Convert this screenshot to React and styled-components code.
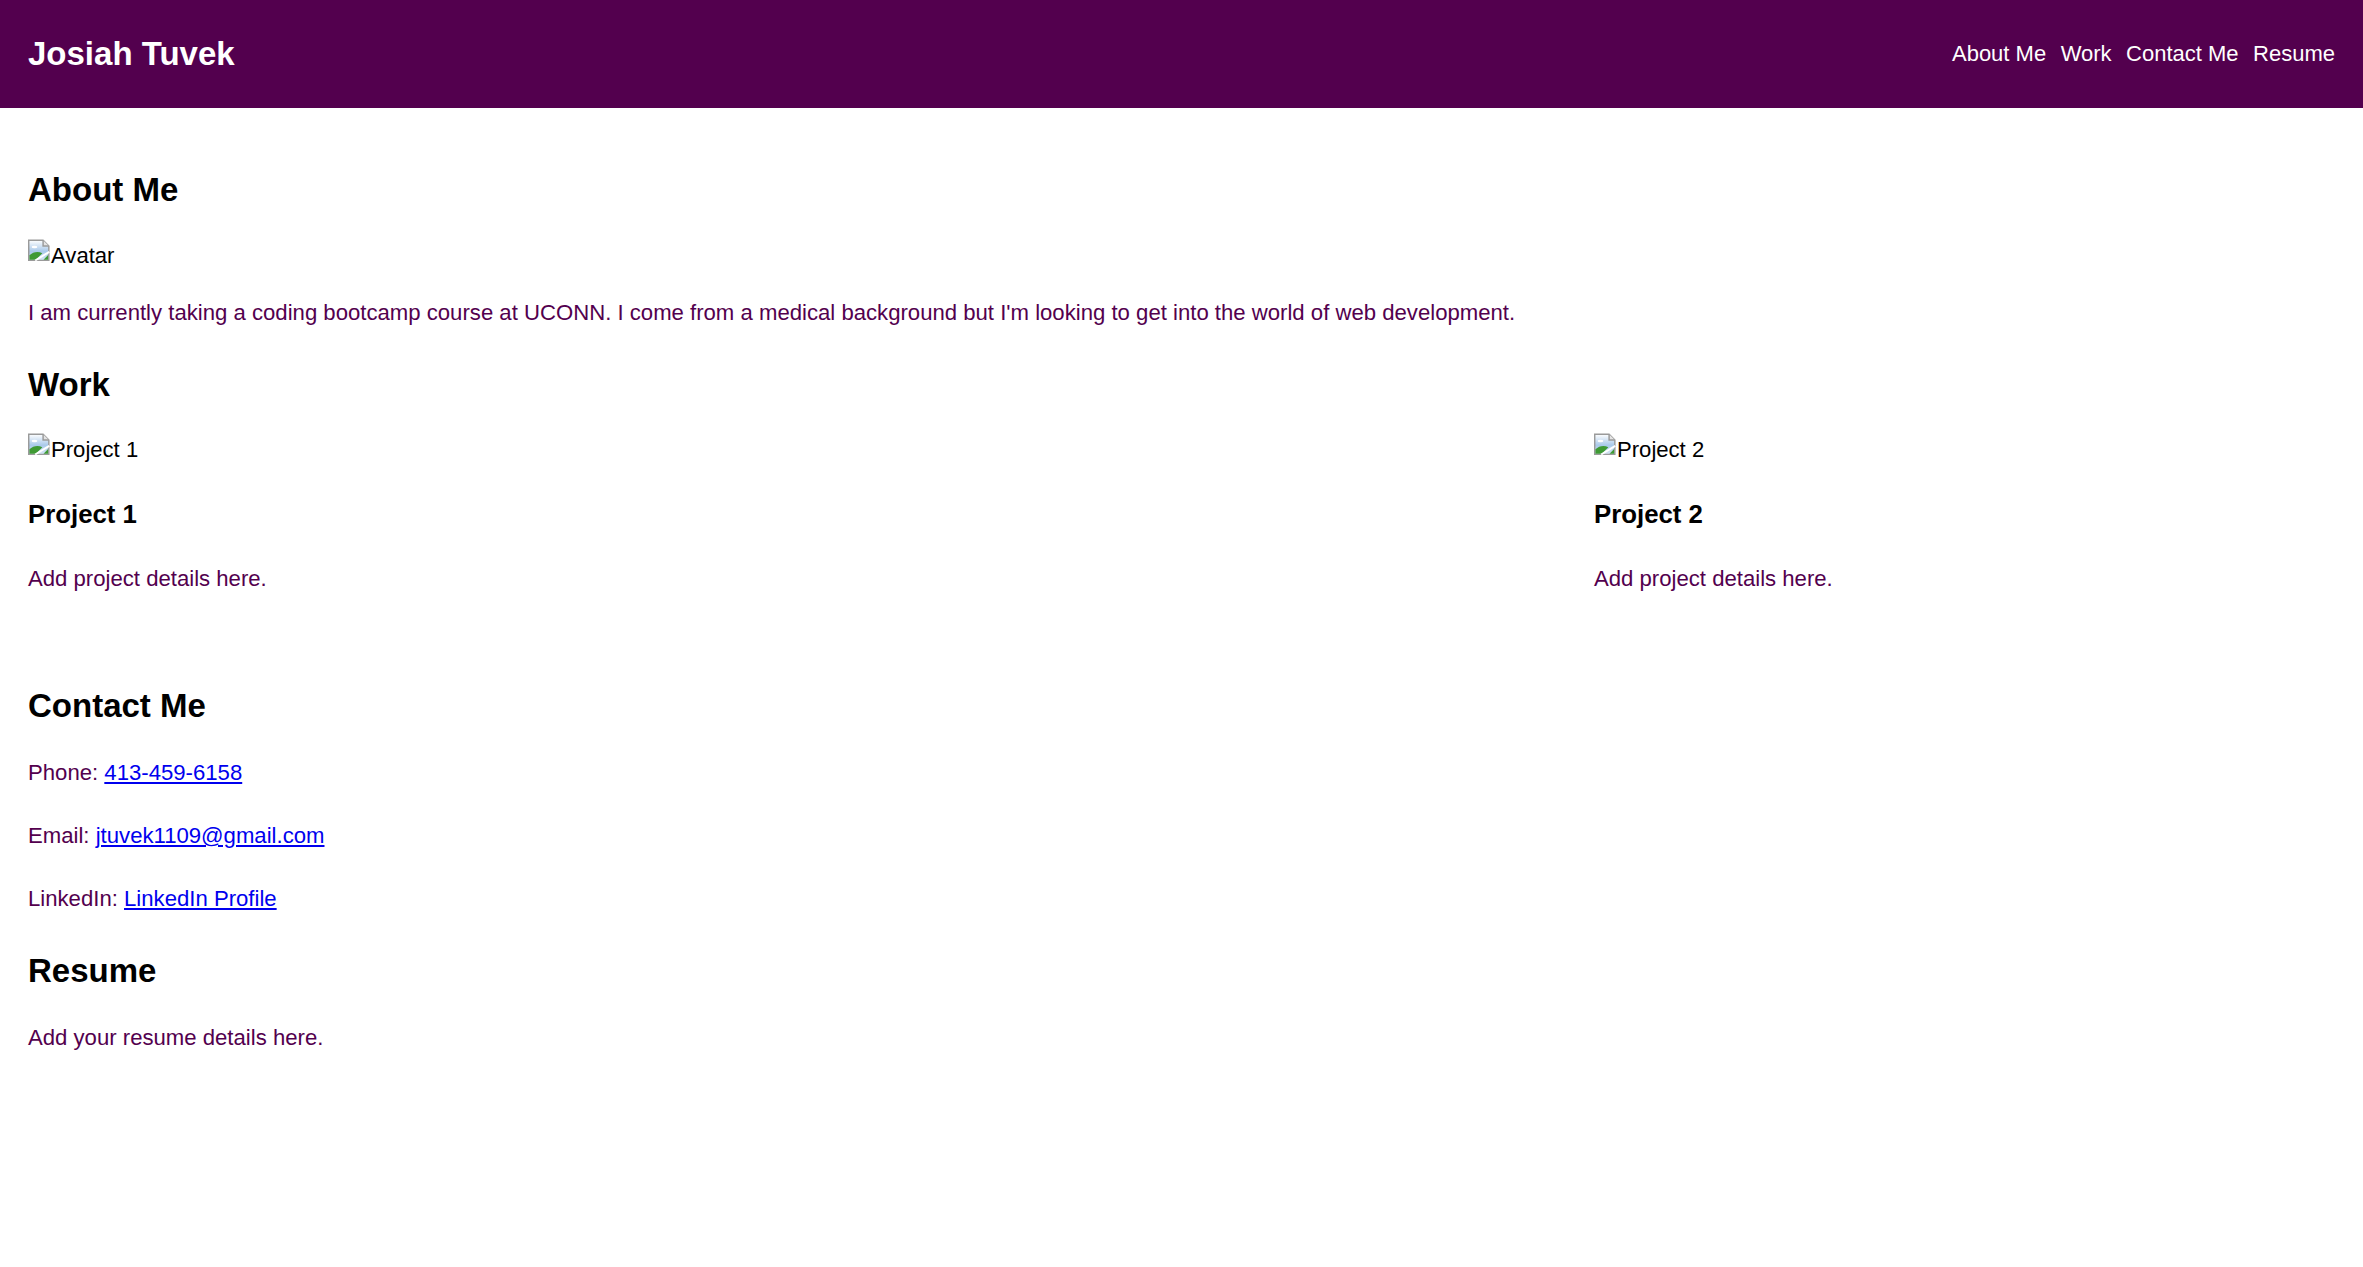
import React from "react";
import styled, { createGlobalStyle } from "styled-components";

const GlobalStyle = createGlobalStyle`
  html, body {
    margin: 0;
    padding: 0;
    background: #ffffff;
  }
  body {
    font-family: "Liberation Sans", Arial, sans-serif;
    font-size: 22.1px;
    color: #53004e;
  }
`;

const Header = styled.header`
  display: flex;
  align-items: center;
  justify-content: space-between;
  height: 108px;
  padding: 0 28px;
  background: #53004e;
`;

const Brand = styled.h1`
  margin: 0;
  font-size: 33px;
  line-height: 38px;
  font-weight: 700;
  color: #ffffff;
`;

const Nav = styled.nav`
  display: flex;
  align-items: center;
  gap: 14.5px;
`;

const NavLink = styled.a`
  color: #ffffff;
  text-decoration: none;
  font-size: 22px;
  line-height: 26px;
`;

const Main = styled.main`
  padding: 63px 28px 80px;
`;

const Section = styled.section`
  display: flex;
  flex-direction: column;
  align-items: flex-start;
  margin-top: ${(p) => p.$mt || 0}px;
`;

const SectionTitle = styled.h2`
  margin: 0;
  font-size: 33px;
  line-height: 38px;
  font-weight: 700;
  color: #000000;
`;

const Text = styled.p`
  margin: ${(p) => p.$mt || 0}px 0 0;
  font-size: 22.15px;
  line-height: 26px;
  color: #53004e;
`;

const Link = styled.a`
  color: #0000ee;
  text-decoration: underline;
`;

const AltRow = styled.div`
  display: flex;
  align-items: flex-start;
  margin-top: ${(p) => p.$mt || 0}px;
  color: #000000;
  font-size: 22.1px;
  line-height: 26px;
`;

const AltText = styled.span`
  padding-top: 4px;
`;

const Projects = styled.div`
  display: grid;
  grid-template-columns: 1566px 1fr;
  align-self: stretch;
  margin-top: 29px;
`;

const Project = styled.article`
  display: flex;
  flex-direction: column;
  align-items: flex-start;
`;

const ProjectTitle = styled.h3`
  margin: 36px 0 0;
  font-size: 25.8px;
  line-height: 30px;
  font-weight: 700;
  color: #000000;
`;

const BrokenIcon = () => (
  <svg width="23" height="24" viewBox="0 0 16 16" aria-hidden="true">
    <defs>
      <linearGradient id="sky" x1="0" y1="0" x2="0" y2="1">
        <stop offset="0" stopColor="#ffffff" />
        <stop offset="0.55" stopColor="#a9c9ea" />
        <stop offset="1" stopColor="#d7e7f6" />
      </linearGradient>
    </defs>
    <path d="M0.5 0.5 H10.5 L14.5 4.5 V14.5 H0.5 Z" fill="url(#sky)" stroke="#9a9a9a" strokeWidth="1" />
    <path d="M10.5 0.5 V4.5 H14.5" fill="#e4e4e4" stroke="#9a9a9a" strokeWidth="1" />
    <ellipse cx="4.5" cy="5.2" rx="2" ry="0.9" fill="#ffffff" />
    <path d="M1 14 V11 C3.5 8.5 7 8 10 9.5 L5.5 14 Z" fill="#3f9a34" />
    <path d="M10.8 14 L14 10.8 V14 Z" fill="#3f9a34" />
    <path d="M5 14.6 L14.8 8.6" stroke="#ffffff" strokeWidth="1.4" />
  </svg>
);

const BrokenImage = ({ alt, mt }) => (
  <AltRow $mt={mt}>
    <BrokenIcon />
    <AltText>{alt}</AltText>
  </AltRow>
);

const projects = [
  { id: 1, name: "Project 1" },
  { id: 2, name: "Project 2" },
];

export default function App() {
  return (
    <>
      <GlobalStyle />
      <Header>
        <Brand>Josiah Tuvek</Brand>
        <Nav>
          <NavLink href="#about">About Me</NavLink>
          <NavLink href="#work">Work</NavLink>
          <NavLink href="#contact">Contact Me</NavLink>
          <NavLink href="#resume">Resume</NavLink>
        </Nav>
      </Header>
      <Main>
        <Section id="about">
          <SectionTitle>About Me</SectionTitle>
          <BrokenImage alt="Avatar" mt={30} />
          <Text $mt={31}>
            I am currently taking a coding bootcamp course at UCONN. I come from a medical background but I'm looking to get into the world of web development.
          </Text>
        </Section>
        <Section id="work" $mt={40}>
          <SectionTitle>Work</SectionTitle>
          <Projects>
            {projects.map((p) => (
              <Project key={p.id}>
                <BrokenImage alt={p.name} mt={0} />
                <ProjectTitle>{p.name}</ProjectTitle>
                <Text $mt={37}>Add project details here.</Text>
              </Project>
            ))}
          </Projects>
        </Section>
        <Section id="contact" $mt={95}>
          <SectionTitle>Contact Me</SectionTitle>
          <Text $mt={35}>
            Phone: <Link href="tel:4134596158">413-459-6158</Link>
          </Text>
          <Text $mt={37}>
            Email: <Link href="mailto:jtuvek1109@gmail.com">jtuvek1109@gmail.com</Link>
          </Text>
          <Text $mt={37}>
            LinkedIn: <Link href="#linkedin">LinkedIn Profile</Link>
          </Text>
        </Section>
        <Section id="resume" $mt={40}>
          <SectionTitle>Resume</SectionTitle>
          <Text $mt={35}>Add your resume details here.</Text>
        </Section>
      </Main>
    </>
  );
}
